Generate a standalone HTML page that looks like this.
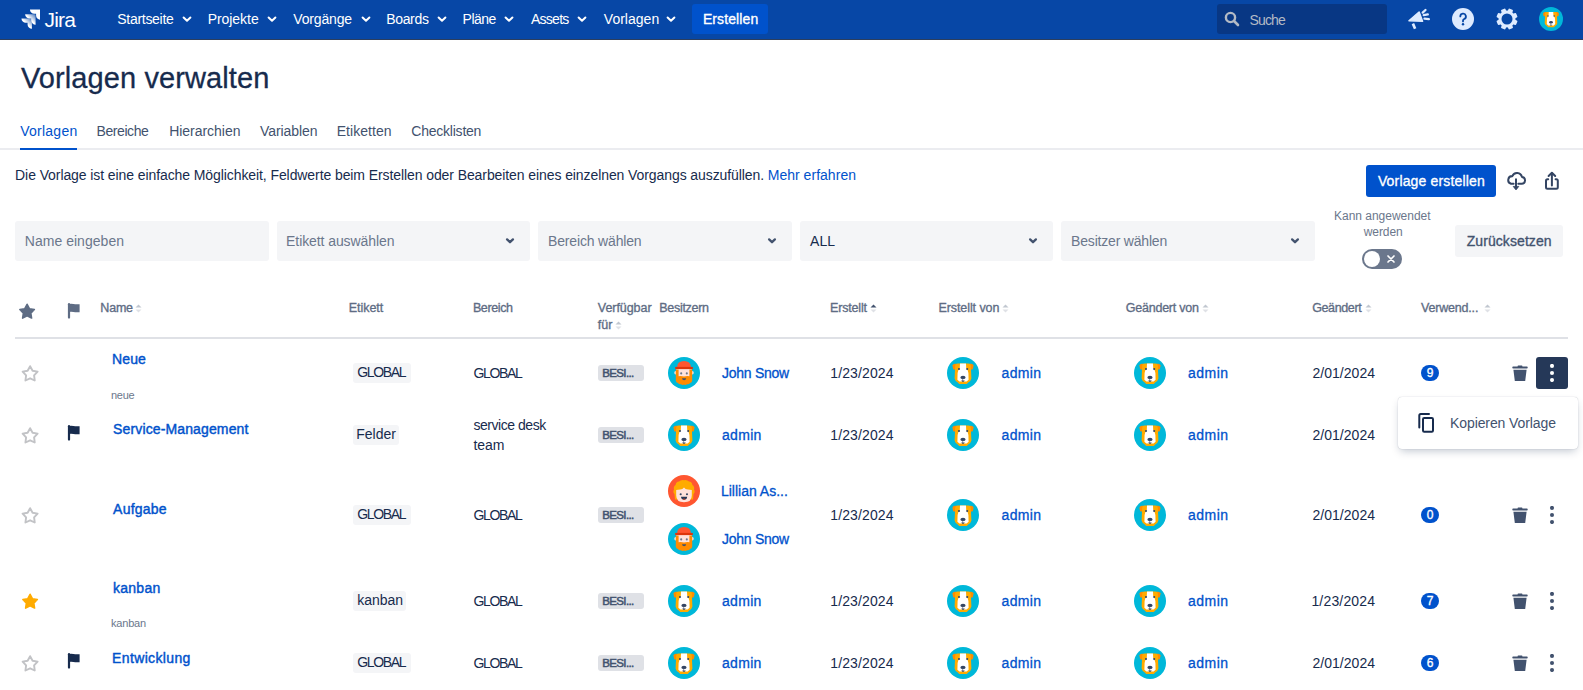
<!DOCTYPE html>
<html><head><meta charset="utf-8"><title>Vorlagen verwalten</title>
<style>
html,body{margin:0;padding:0;background:#fff;width:1583px;height:690px;overflow:hidden;position:relative;font-family:"Liberation Sans", sans-serif}
.t{position:absolute;white-space:nowrap;line-height:1}
svg{display:block}
</style></head><body>
<div style="position:absolute;left:0px;top:0px;width:1583px;height:39px;background:#0747A6"></div>
<div style="position:absolute;left:0px;top:39px;width:1583px;height:1px;background:#2c3e5d"></div>
<svg style="position:absolute;left:20.5px;top:9.3px" width="19.8" height="19.8" viewBox="0 0 21 21">
<defs><linearGradient id="lg1" x1="1" y1="0" x2="0" y2="1"><stop offset="0" stop-color="#fff" stop-opacity=".25"/><stop offset=".5" stop-color="#fff"/><stop offset="1" stop-color="#fff"/></linearGradient></defs>
<path d="M20 0.5H9.5a4.6 4.6 0 0 0 4.6 4.6h1.9v1.8a4.6 4.6 0 0 0 4.6 4.6V1.1A.6.6 0 0 0 20 .5z" fill="#fff"/>
<path d="M14.9 5.6H4.4a4.6 4.6 0 0 0 4.6 4.6h1.9V12a4.6 4.6 0 0 0 4.6 4.6V6.2a.6.6 0 0 0-.6-.6z" fill="url(#lg1)"/>
<path d="M9.7 10.8H-.7a4.6 4.6 0 0 0 4.6 4.6h1.9v1.8a4.6 4.6 0 0 0 4.6 4.6v-10.4a.6.6 0 0 0-.6-.6z" fill="url(#lg1)" transform="translate(1.2,-.8)"/>
</svg>
<div class="t" style="left:44.60px;top:9.12px;font-size:21px;color:#fff;font-weight:400;letter-spacing:-0.820px;">Jira</div>
<div class="t" style="left:117.30px;top:12.15px;font-size:14px;color:#fff;font-weight:400;letter-spacing:-0.295px;">Startseite</div>
<svg style="position:absolute;left:181.9px;top:16px" width="10" height="7" viewBox="0 0 10 7"><path d="M1.6 1.5 L5 4.8 L8.4 1.5" fill="none" stroke="#fff" stroke-width="2" stroke-linecap="round" stroke-linejoin="round"/></svg>
<div class="t" style="left:207.70px;top:12.15px;font-size:14px;color:#fff;font-weight:400;letter-spacing:-0.053px;">Projekte</div>
<svg style="position:absolute;left:266.6px;top:16px" width="10" height="7" viewBox="0 0 10 7"><path d="M1.6 1.5 L5 4.8 L8.4 1.5" fill="none" stroke="#fff" stroke-width="2" stroke-linecap="round" stroke-linejoin="round"/></svg>
<div class="t" style="left:293.30px;top:12.15px;font-size:14px;color:#fff;font-weight:400;letter-spacing:-0.165px;">Vorgänge</div>
<svg style="position:absolute;left:360.5px;top:16px" width="10" height="7" viewBox="0 0 10 7"><path d="M1.6 1.5 L5 4.8 L8.4 1.5" fill="none" stroke="#fff" stroke-width="2" stroke-linecap="round" stroke-linejoin="round"/></svg>
<div class="t" style="left:386.20px;top:12.15px;font-size:14px;color:#fff;font-weight:400;letter-spacing:-0.332px;">Boards</div>
<svg style="position:absolute;left:436.8px;top:16px" width="10" height="7" viewBox="0 0 10 7"><path d="M1.6 1.5 L5 4.8 L8.4 1.5" fill="none" stroke="#fff" stroke-width="2" stroke-linecap="round" stroke-linejoin="round"/></svg>
<div class="t" style="left:462.60px;top:12.15px;font-size:14px;color:#fff;font-weight:400;letter-spacing:-0.530px;">Pläne</div>
<svg style="position:absolute;left:504.3px;top:16px" width="10" height="7" viewBox="0 0 10 7"><path d="M1.6 1.5 L5 4.8 L8.4 1.5" fill="none" stroke="#fff" stroke-width="2" stroke-linecap="round" stroke-linejoin="round"/></svg>
<div class="t" style="left:531.00px;top:12.15px;font-size:14px;color:#fff;font-weight:400;letter-spacing:-0.743px;">Assets</div>
<svg style="position:absolute;left:577.0999999999999px;top:16px" width="10" height="7" viewBox="0 0 10 7"><path d="M1.6 1.5 L5 4.8 L8.4 1.5" fill="none" stroke="#fff" stroke-width="2" stroke-linecap="round" stroke-linejoin="round"/></svg>
<div class="t" style="left:603.80px;top:12.15px;font-size:14px;color:#fff;font-weight:400;letter-spacing:0.017px;">Vorlagen</div>
<svg style="position:absolute;left:666.3px;top:16px" width="10" height="7" viewBox="0 0 10 7"><path d="M1.6 1.5 L5 4.8 L8.4 1.5" fill="none" stroke="#fff" stroke-width="2" stroke-linecap="round" stroke-linejoin="round"/></svg>
<div style="position:absolute;left:692px;top:4px;width:76px;height:30px;background:#0052CC;border-radius:3px"></div>
<div class="t" style="left:702.90px;top:12.05px;font-size:14px;color:#fff;font-weight:400;letter-spacing:0.102px;-webkit-text-stroke:0.33px #fff;">Erstellen</div>
<div style="position:absolute;left:1217px;top:4px;width:170px;height:30px;background:#083784;border-radius:3px"></div>
<svg style="position:absolute;left:1224px;top:11px" width="16" height="16" viewBox="0 0 16 16"><circle cx="6.5" cy="6.5" r="4.6" fill="none" stroke="#B3BAC5" stroke-width="2.4"/><path d="M10 10 L14 14" stroke="#B3BAC5" stroke-width="2.6" stroke-linecap="round"/></svg>
<div class="t" style="left:1249.60px;top:12.95px;font-size:14px;color:#B3BAC5;font-weight:400;letter-spacing:-0.903px;">Suche</div>
<svg style="position:absolute;left:1407px;top:8px" width="24" height="22" viewBox="0 0 24 22"><path d="M2 12.8 L12.1 4.1 L15.5 13.3 Z" fill="#DEEBFF" stroke="#DEEBFF" stroke-width="1.6" stroke-linejoin="round"/><path d="M5.9 15.6 L8.1 20.7" stroke="#DEEBFF" stroke-width="2.7"/><path d="M15.7 4.6 L18.5 2 M16.7 7.1 L20.8 6.4 M17.5 10.7 L21.9 11.2" stroke="#DEEBFF" stroke-width="2.3" stroke-linecap="round"/></svg>
<svg style="position:absolute;left:1452px;top:8px" width="22" height="22" viewBox="0 0 22 22"><circle cx="11" cy="11" r="11" fill="#DEEBFF"/><path d="M8.3 8.4a2.8 2.8 0 1 1 3.9 2.6c-.8.4-1.2.9-1.2 1.8v.6" fill="none" stroke="#0747A6" stroke-width="1.8" stroke-linecap="round"/><circle cx="11" cy="16.3" r="1.2" fill="#0747A6"/></svg>
<svg style="position:absolute;left:1496px;top:8px" width="22" height="22" viewBox="0 0 22 22"><g transform="translate(11,11)"><rect x="-2.4" y="-10.6" width="4.8" height="5" rx="1" fill="#DEEBFF" transform="rotate(22.5)"/><rect x="-2.4" y="-10.6" width="4.8" height="5" rx="1" fill="#DEEBFF" transform="rotate(67.5)"/><rect x="-2.4" y="-10.6" width="4.8" height="5" rx="1" fill="#DEEBFF" transform="rotate(112.5)"/><rect x="-2.4" y="-10.6" width="4.8" height="5" rx="1" fill="#DEEBFF" transform="rotate(157.5)"/><rect x="-2.4" y="-10.6" width="4.8" height="5" rx="1" fill="#DEEBFF" transform="rotate(202.5)"/><rect x="-2.4" y="-10.6" width="4.8" height="5" rx="1" fill="#DEEBFF" transform="rotate(247.5)"/><rect x="-2.4" y="-10.6" width="4.8" height="5" rx="1" fill="#DEEBFF" transform="rotate(292.5)"/><rect x="-2.4" y="-10.6" width="4.8" height="5" rx="1" fill="#DEEBFF" transform="rotate(337.5)"/><circle r="8.5" fill="#DEEBFF"/><circle r="5.5" fill="#0747A6"/></g></svg>
<div style="position:absolute;left:1539px;top:7px;width:24px;height:24px;overflow:hidden">
<svg style="position:absolute;left:0px;top:0px" width="24" height="24" viewBox="0 0 32 32"><circle cx="16" cy="16" r="16" fill="#00B8D9"/>
<path d="M5.6 8.2 Q6.5 6.6 9 6.8 L11 7.5 L10.2 12.6 L6.4 12.4 Q5.4 10.5 5.6 8.2Z" fill="#FF8B00"/>
<path d="M26.4 8.2 Q25.5 6.6 23 6.8 L21 7.5 L21.8 12.6 L25.6 12.4 Q26.6 10.5 26.4 8.2Z" fill="#FF8B00"/>
<path d="M8.2 8.6 Q8.5 6.6 10.5 6.6 H21.5 Q23.5 6.6 23.8 8.6 L24.4 21.6 Q24 23.8 21.5 25.2 L19.8 27 H12.2 L10.5 25.2 Q8 23.8 7.6 21.6 Z" fill="#FFAB00"/>
<path d="M13 6.6 H19 L19.2 11 Q21.2 13 21.4 16 L21.6 22.8 L19.6 24.6 H12.4 L10.4 22.8 L10.6 16 Q10.8 13 12.8 11 Z" fill="#fff"/>
<circle cx="12" cy="12" r="1.05" fill="#344563"/><circle cx="20.2" cy="12" r="1.05" fill="#344563"/>
<ellipse cx="16" cy="20.4" rx="2.6" ry="1.7" fill="#344563"/><path d="M14.2 23.6 H17.8 L16.8 24.8 H15.2 Z" fill="#344563"/><path d="M15.7 21.5 V23.8" stroke="#344563" stroke-width=".6"/>
</svg>
</div>
<div class="t" style="left:21.00px;top:63.65px;font-size:29px;color:#172B4D;font-weight:400;letter-spacing:0.098px;-webkit-text-stroke:0.3px #172B4D;">Vorlagen verwalten</div>
<div class="t" style="left:20.30px;top:123.95px;font-size:14px;color:#0052CC;font-weight:400;letter-spacing:0.231px;">Vorlagen</div>
<div class="t" style="left:96.60px;top:123.95px;font-size:14px;color:#42526E;font-weight:400;letter-spacing:-0.438px;">Bereiche</div>
<div class="t" style="left:169.20px;top:123.95px;font-size:14px;color:#42526E;font-weight:400;letter-spacing:-0.030px;">Hierarchien</div>
<div class="t" style="left:260.00px;top:123.95px;font-size:14px;color:#42526E;font-weight:400;letter-spacing:-0.078px;">Variablen</div>
<div class="t" style="left:336.70px;top:123.95px;font-size:14px;color:#42526E;font-weight:400;letter-spacing:0.051px;">Etiketten</div>
<div class="t" style="left:411.30px;top:123.95px;font-size:14px;color:#42526E;font-weight:400;letter-spacing:-0.228px;">Checklisten</div>
<div style="position:absolute;left:0px;top:148px;width:1583px;height:2px;background:#EBECF0"></div>
<div style="position:absolute;left:20px;top:148px;width:57px;height:2px;background:#0052CC"></div>
<div class="t" style="left:15.10px;top:167.95px;font-size:14px;color:#172B4D;font-weight:400;letter-spacing:-0.088px;">Die Vorlage ist eine einfache Möglichkeit, Feldwerte beim Erstellen oder Bearbeiten eines einzelnen Vorgangs auszufüllen.</div>
<div class="t" style="left:767.70px;top:167.95px;font-size:14px;color:#0052CC;font-weight:400;letter-spacing:0.030px;">Mehr erfahren</div>
<div style="position:absolute;left:1366px;top:165px;width:130px;height:32px;background:#0052CC;border-radius:3px"></div>
<div class="t" style="left:1377.90px;top:174.15px;font-size:14px;color:#fff;font-weight:400;letter-spacing:0.162px;-webkit-text-stroke:0.33px #fff;">Vorlage erstellen</div>
<svg style="position:absolute;left:1504px;top:170px" width="24" height="22" viewBox="0 0 24 22"><path d="M9.6 13.75 H7 A3.9 3.9 0 0 1 8.32 6.13 A5 5 0 0 1 17.90 6.91 A3.4 3.4 0 0 1 17.6 13.7 H14.3" fill="none" stroke="#344563" stroke-width="2" stroke-linecap="round" stroke-linejoin="round"/><path d="M12 8.6 V17" stroke="#344563" stroke-width="2"/><path d="M9.2 16.4 L12 19.9 L14.8 16.4 Z" fill="#344563" stroke="#344563" stroke-width=".8" stroke-linejoin="round"/></svg>
<svg style="position:absolute;left:1543px;top:170px" width="18" height="22" viewBox="0 0 18 22"><path d="M5.2 9.2 H4.5 Q3 9.2 3 10.7 V17.3 Q3 18.8 4.5 18.8 H13.3 Q14.8 18.8 14.8 17.3 V10.7 Q14.8 9.2 13.3 9.2 H12.6" fill="none" stroke="#344563" stroke-width="2" stroke-linecap="round"/><path d="M8.9 15.4 V3.2" stroke="#344563" stroke-width="2" stroke-linecap="round"/><path d="M5.6 6 L8.9 2.7 L12.2 6" fill="none" stroke="#344563" stroke-width="2" stroke-linecap="round" stroke-linejoin="round"/></svg>
<div style="position:absolute;left:15px;top:221px;width:254px;height:40px;background:#F4F5F7;border-radius:3px"></div>
<div class="t" style="left:24.80px;top:233.95px;font-size:14px;color:#6B778C;font-weight:400;letter-spacing:0.028px;">Name eingeben</div>
<div style="position:absolute;left:277px;top:221px;width:253px;height:40px;background:#F4F5F7;border-radius:3px"></div>
<div class="t" style="left:286.10px;top:233.95px;font-size:14px;color:#6B778C;font-weight:400;letter-spacing:-0.084px;">Etikett auswählen</div>
<svg style="position:absolute;left:505px;top:237px" width="10" height="8" viewBox="0 0 10 8"><path d="M2.1 2.4 L5 5.2 L7.9 2.4" fill="none" stroke="#42526E" stroke-width="2.3" stroke-linecap="round" stroke-linejoin="round"/></svg>
<div style="position:absolute;left:538px;top:221px;width:254px;height:40px;background:#F4F5F7;border-radius:3px"></div>
<div class="t" style="left:548.10px;top:233.95px;font-size:14px;color:#6B778C;font-weight:400;letter-spacing:-0.172px;">Bereich wählen</div>
<svg style="position:absolute;left:767px;top:237px" width="10" height="8" viewBox="0 0 10 8"><path d="M2.1 2.4 L5 5.2 L7.9 2.4" fill="none" stroke="#42526E" stroke-width="2.3" stroke-linecap="round" stroke-linejoin="round"/></svg>
<div style="position:absolute;left:800px;top:221px;width:253px;height:40px;background:#F4F5F7;border-radius:3px"></div>
<div class="t" style="left:810.10px;top:233.95px;font-size:14px;color:#172B4D;font-weight:400;letter-spacing:0.000px;">ALL</div>
<svg style="position:absolute;left:1028px;top:237px" width="10" height="8" viewBox="0 0 10 8"><path d="M2.1 2.4 L5 5.2 L7.9 2.4" fill="none" stroke="#42526E" stroke-width="2.3" stroke-linecap="round" stroke-linejoin="round"/></svg>
<div style="position:absolute;left:1061px;top:221px;width:254px;height:40px;background:#F4F5F7;border-radius:3px"></div>
<div class="t" style="left:1071.10px;top:233.95px;font-size:14px;color:#6B778C;font-weight:400;letter-spacing:-0.196px;">Besitzer wählen</div>
<svg style="position:absolute;left:1290px;top:237px" width="10" height="8" viewBox="0 0 10 8"><path d="M2.1 2.4 L5 5.2 L7.9 2.4" fill="none" stroke="#42526E" stroke-width="2.3" stroke-linecap="round" stroke-linejoin="round"/></svg>
<div class="t" style="left:1334.00px;top:209.84px;font-size:12px;color:#6B778C;font-weight:400;letter-spacing:-0.015px;">Kann angewendet</div>
<div class="t" style="left:1363.70px;top:226.24px;font-size:12px;color:#6B778C;font-weight:400;letter-spacing:-0.057px;">werden</div>
<div style="position:absolute;left:1362px;top:249px;width:40px;height:20px;background:#6B778C;border-radius:10px"></div>
<div style="position:absolute;left:1364px;top:251px;width:16px;height:16px;background:#fff;border-radius:8px"></div>
<svg style="position:absolute;left:1386px;top:254px" width="10" height="10" viewBox="0 0 10 10"><path d="M2 2 L8 8 M8 2 L2 8" stroke="#fff" stroke-width="1.7" stroke-linecap="round"/></svg>
<div style="position:absolute;left:1455px;top:225px;width:108px;height:32px;background:#F4F5F7;border-radius:3px"></div>
<div class="t" style="left:1466.70px;top:233.85px;font-size:14px;color:#42526E;font-weight:400;letter-spacing:0.077px;-webkit-text-stroke:0.33px #42526E;">Zurücksetzen</div>
<svg style="position:absolute;left:66.5px;top:303px" width="14" height="16" viewBox="0 0 14 16"><path d="M2 1.2 V14.6" stroke="#5E6C84" stroke-width="2.2" stroke-linecap="round"/><path d="M1.5 1 Q4 0.4 6.5 1 Q9.2 1.6 12.6 1.2 V9.2 Q9.2 9.6 6.5 9 Q4 8.4 1.5 9 Z" fill="#5E6C84"/></svg>
<div class="t" style="left:100.30px;top:301.62px;font-size:12.5px;color:#5E6C84;font-weight:400;letter-spacing:-0.197px;-webkit-text-stroke:0.33px #5E6C84;">Name</div>
<svg style="position:absolute;left:135px;top:304px" width="7" height="9" viewBox="0 0 7 9"><path d="M0.5 3.6 L3.5 0.5 L6.5 3.6 Z" fill="#C1C7D0"/><path d="M0.5 5.4 L3.5 8.5 L6.5 5.4 Z" fill="#DFE1E6"/></svg>
<div class="t" style="left:348.70px;top:301.62px;font-size:12.5px;color:#5E6C84;font-weight:400;letter-spacing:-0.027px;-webkit-text-stroke:0.33px #5E6C84;">Etikett</div>
<div class="t" style="left:472.90px;top:301.62px;font-size:12.5px;color:#5E6C84;font-weight:400;letter-spacing:-0.372px;-webkit-text-stroke:0.33px #5E6C84;">Bereich</div>
<div class="t" style="left:597.80px;top:301.62px;font-size:12.5px;color:#5E6C84;font-weight:400;letter-spacing:-0.055px;-webkit-text-stroke:0.33px #5E6C84;">Verfügbar</div>
<div class="t" style="left:659.30px;top:301.62px;font-size:12.5px;color:#5E6C84;font-weight:400;letter-spacing:-0.307px;-webkit-text-stroke:0.33px #5E6C84;">Besitzern</div>
<div class="t" style="left:830.00px;top:301.62px;font-size:12.5px;color:#5E6C84;font-weight:400;letter-spacing:-0.161px;-webkit-text-stroke:0.33px #5E6C84;">Erstellt</div>
<svg style="position:absolute;left:870px;top:304px" width="7" height="9" viewBox="0 0 7 9"><path d="M0.5 3.6 L3.5 0.5 L6.5 3.6 Z" fill="#42526E"/><path d="M0.5 5.4 L3.5 8.5 L6.5 5.4 Z" fill="#DFE1E6"/></svg>
<div class="t" style="left:938.40px;top:301.62px;font-size:12.5px;color:#5E6C84;font-weight:400;letter-spacing:-0.071px;-webkit-text-stroke:0.33px #5E6C84;">Erstellt von</div>
<svg style="position:absolute;left:1002px;top:304px" width="7" height="9" viewBox="0 0 7 9"><path d="M0.5 3.6 L3.5 0.5 L6.5 3.6 Z" fill="#C1C7D0"/><path d="M0.5 5.4 L3.5 8.5 L6.5 5.4 Z" fill="#DFE1E6"/></svg>
<div class="t" style="left:1125.80px;top:301.62px;font-size:12.5px;color:#5E6C84;font-weight:400;letter-spacing:-0.236px;-webkit-text-stroke:0.33px #5E6C84;">Geändert von</div>
<svg style="position:absolute;left:1202px;top:304px" width="7" height="9" viewBox="0 0 7 9"><path d="M0.5 3.6 L3.5 0.5 L6.5 3.6 Z" fill="#C1C7D0"/><path d="M0.5 5.4 L3.5 8.5 L6.5 5.4 Z" fill="#DFE1E6"/></svg>
<div class="t" style="left:1312.20px;top:301.62px;font-size:12.5px;color:#5E6C84;font-weight:400;letter-spacing:-0.378px;-webkit-text-stroke:0.33px #5E6C84;">Geändert</div>
<svg style="position:absolute;left:1365px;top:304px" width="7" height="9" viewBox="0 0 7 9"><path d="M0.5 3.6 L3.5 0.5 L6.5 3.6 Z" fill="#C1C7D0"/><path d="M0.5 5.4 L3.5 8.5 L6.5 5.4 Z" fill="#DFE1E6"/></svg>
<div class="t" style="left:1421.00px;top:301.62px;font-size:12.5px;color:#5E6C84;font-weight:400;letter-spacing:-0.188px;-webkit-text-stroke:0.33px #5E6C84;">Verwend...</div>
<svg style="position:absolute;left:1484px;top:304px" width="7" height="9" viewBox="0 0 7 9"><path d="M0.5 3.6 L3.5 0.5 L6.5 3.6 Z" fill="#C1C7D0"/><path d="M0.5 5.4 L3.5 8.5 L6.5 5.4 Z" fill="#DFE1E6"/></svg>
<div class="t" style="left:597.80px;top:318.92px;font-size:12.5px;color:#5E6C84;font-weight:400;letter-spacing:0.000px;-webkit-text-stroke:0.33px #5E6C84;">für</div>
<svg style="position:absolute;left:614.5px;top:320.5px" width="7" height="9" viewBox="0 0 7 9"><path d="M0.5 3.6 L3.5 0.5 L6.5 3.6 Z" fill="#C1C7D0"/><path d="M0.5 5.4 L3.5 8.5 L6.5 5.4 Z" fill="#DFE1E6"/></svg>
<div style="position:absolute;left:15px;top:337px;width:1553px;height:2px;background:#DFE1E6"></div>
<svg style="position:absolute;left:17px;top:301px" width="20" height="20" viewBox="0 0 20 20"><path d="M10.10 3.30 L12.39 7.74 L17.33 8.55 L13.81 12.11 L14.57 17.05 L10.10 14.80 L5.63 17.05 L6.39 12.11 L2.87 8.55 L7.81 7.74 Z" fill="#5E6C84" stroke="#5E6C84" stroke-width="1.6" stroke-linejoin="round"/></svg>
<svg style="position:absolute;left:20px;top:363px" width="20" height="20" viewBox="0 0 20 20"><path d="M10.10 3.20 L12.57 7.70 L17.61 8.66 L14.09 12.40 L14.74 17.49 L10.10 15.30 L5.46 17.49 L6.11 12.40 L2.59 8.66 L7.63 7.70 Z" fill="none" stroke="#C2C3C6" stroke-width="1.9" stroke-linejoin="round"/></svg>
<div class="t" style="left:112.10px;top:352.35px;font-size:14px;color:#0052CC;font-weight:400;letter-spacing:0.106px;-webkit-text-stroke:0.42px #0052CC;">Neue</div>
<div class="t" style="left:111.00px;top:389.69px;font-size:11px;color:#6B778C;font-weight:400;letter-spacing:-0.284px;">neue</div>
<div style="position:absolute;left:353px;top:363.4px;width:57.7px;height:19.2px;background:#F4F5F7;border-radius:3px"></div>
<div class="t" style="left:357.20px;top:365.25px;font-size:14px;color:#172B4D;font-weight:400;letter-spacing:-1.348px;">GLOBAL</div>
<div class="t" style="left:473.40px;top:365.95px;font-size:14px;color:#172B4D;font-weight:400;letter-spacing:-1.328px;">GLOBAL</div>
<div style="position:absolute;left:598px;top:365.2px;width:45.5px;height:15.6px;background:#DFE1E6;border-radius:3px"></div>
<div class="t" style="left:602.20px;top:367.87px;font-size:11.5px;color:#42526E;font-weight:400;letter-spacing:-0.616px;-webkit-text-stroke:0.5px #42526E;">BESI...</div>
<svg style="position:absolute;left:668px;top:357px" width="32" height="32" viewBox="0 0 32 32"><circle cx="16" cy="16" r="16" fill="#00B8D9"/>
<ellipse cx="7.6" cy="15.7" rx="1.3" ry="1.8" fill="#FFE2DB"/><ellipse cx="24.4" cy="15.7" rx="1.3" ry="1.8" fill="#FFE2DB"/>
<rect x="8.3" y="11.5" width="15.4" height="9" fill="#FFE2DB"/>
<path d="M7.8 12.5 H10.6 V19.2 Q13 18.6 16 19.6 Q19 18.6 21.4 19.2 V12.5 H24.2 V23.5 Q24 25.6 22 26 Q21 27.8 19 27.2 Q17.5 28.4 16 27.6 Q14.5 28.4 13 27.2 Q11 27.8 10 26 Q8 25.6 7.8 23.5 Z" fill="#FF8B00"/>
<path d="M9.1 10.2 Q9.3 3.9 16 3.9 Q22.7 3.9 22.9 10.2 Z" fill="#FF5630"/>
<rect x="7.2" y="9.9" width="17.6" height="2.2" fill="#DE350B"/>
<circle cx="13.2" cy="16.4" r="1.05" fill="#6B778C"/><circle cx="18.8" cy="16.4" r="1.05" fill="#6B778C"/>
<path d="M14 21.2 H18.2 Q18 23.3 16.1 23.3 Q14.2 23.3 14 21.2Z" fill="#42526E"/>
</svg>
<div class="t" style="left:721.90px;top:366.05px;font-size:14px;color:#0052CC;font-weight:400;letter-spacing:-0.245px;-webkit-text-stroke:0.3px #0052CC;">John Snow</div>
<div class="t" style="left:830.30px;top:365.95px;font-size:14px;color:#172B4D;font-weight:400;letter-spacing:0.113px;">1/23/2024</div>
<svg style="position:absolute;left:947px;top:357px" width="32" height="32" viewBox="0 0 32 32"><circle cx="16" cy="16" r="16" fill="#00B8D9"/>
<path d="M5.6 8.2 Q6.5 6.6 9 6.8 L11 7.5 L10.2 12.6 L6.4 12.4 Q5.4 10.5 5.6 8.2Z" fill="#FF8B00"/>
<path d="M26.4 8.2 Q25.5 6.6 23 6.8 L21 7.5 L21.8 12.6 L25.6 12.4 Q26.6 10.5 26.4 8.2Z" fill="#FF8B00"/>
<path d="M8.2 8.6 Q8.5 6.6 10.5 6.6 H21.5 Q23.5 6.6 23.8 8.6 L24.4 21.6 Q24 23.8 21.5 25.2 L19.8 27 H12.2 L10.5 25.2 Q8 23.8 7.6 21.6 Z" fill="#FFAB00"/>
<path d="M13 6.6 H19 L19.2 11 Q21.2 13 21.4 16 L21.6 22.8 L19.6 24.6 H12.4 L10.4 22.8 L10.6 16 Q10.8 13 12.8 11 Z" fill="#fff"/>
<circle cx="12" cy="12" r="1.05" fill="#344563"/><circle cx="20.2" cy="12" r="1.05" fill="#344563"/>
<ellipse cx="16" cy="20.4" rx="2.6" ry="1.7" fill="#344563"/><path d="M14.2 23.6 H17.8 L16.8 24.8 H15.2 Z" fill="#344563"/><path d="M15.7 21.5 V23.8" stroke="#344563" stroke-width=".6"/>
</svg>
<div class="t" style="left:1001.60px;top:366.05px;font-size:14px;color:#0052CC;font-weight:400;letter-spacing:0.339px;-webkit-text-stroke:0.3px #0052CC;">admin</div>
<svg style="position:absolute;left:1134px;top:357px" width="32" height="32" viewBox="0 0 32 32"><circle cx="16" cy="16" r="16" fill="#00B8D9"/>
<path d="M5.6 8.2 Q6.5 6.6 9 6.8 L11 7.5 L10.2 12.6 L6.4 12.4 Q5.4 10.5 5.6 8.2Z" fill="#FF8B00"/>
<path d="M26.4 8.2 Q25.5 6.6 23 6.8 L21 7.5 L21.8 12.6 L25.6 12.4 Q26.6 10.5 26.4 8.2Z" fill="#FF8B00"/>
<path d="M8.2 8.6 Q8.5 6.6 10.5 6.6 H21.5 Q23.5 6.6 23.8 8.6 L24.4 21.6 Q24 23.8 21.5 25.2 L19.8 27 H12.2 L10.5 25.2 Q8 23.8 7.6 21.6 Z" fill="#FFAB00"/>
<path d="M13 6.6 H19 L19.2 11 Q21.2 13 21.4 16 L21.6 22.8 L19.6 24.6 H12.4 L10.4 22.8 L10.6 16 Q10.8 13 12.8 11 Z" fill="#fff"/>
<circle cx="12" cy="12" r="1.05" fill="#344563"/><circle cx="20.2" cy="12" r="1.05" fill="#344563"/>
<ellipse cx="16" cy="20.4" rx="2.6" ry="1.7" fill="#344563"/><path d="M14.2 23.6 H17.8 L16.8 24.8 H15.2 Z" fill="#344563"/><path d="M15.7 21.5 V23.8" stroke="#344563" stroke-width=".6"/>
</svg>
<div class="t" style="left:1187.90px;top:366.05px;font-size:14px;color:#0052CC;font-weight:400;letter-spacing:0.514px;-webkit-text-stroke:0.3px #0052CC;">admin</div>
<div class="t" style="left:1312.40px;top:365.95px;font-size:14px;color:#172B4D;font-weight:400;letter-spacing:0.050px;">2/01/2024</div>
<div style="position:absolute;left:1421px;top:365px;width:18px;height:16px;background:#0052CC;border-radius:8px"></div>
<div class="t" style="left:1426.80px;top:367.14px;font-size:12px;color:#fff;font-weight:400;letter-spacing:0.000px;-webkit-text-stroke:0.33px #fff;">9</div>
<svg style="position:absolute;left:1512px;top:365px" width="16" height="16" viewBox="0 0 16 16"><rect x="5.6" y="0.6" width="4.8" height="1.8" rx=".6" fill="#42526E"/><rect x="0.3" y="1.6" width="15.4" height="2" rx=".8" fill="#42526E"/><path d="M1.4 4.8 H14.6 L13.2 16 H2.8 Z" fill="#42526E"/></svg>
<div style="position:absolute;left:1536px;top:357px;width:32px;height:32px;background:#253858;border-radius:3px"></div>
<svg style="position:absolute;left:1549px;top:364px" width="6" height="18" viewBox="0 0 6 18"><circle cx="3" cy="1.9" r="2.05" fill="#fff"/><circle cx="3" cy="9" r="2.05" fill="#fff"/><circle cx="3" cy="16" r="2.05" fill="#fff"/></svg>
<svg style="position:absolute;left:20px;top:425px" width="20" height="20" viewBox="0 0 20 20"><path d="M10.10 3.20 L12.57 7.70 L17.61 8.66 L14.09 12.40 L14.74 17.49 L10.10 15.30 L5.46 17.49 L6.11 12.40 L2.59 8.66 L7.63 7.70 Z" fill="none" stroke="#C2C3C6" stroke-width="1.9" stroke-linejoin="round"/></svg>
<svg style="position:absolute;left:66.5px;top:425px" width="14" height="16" viewBox="0 0 14 16"><path d="M2 1.2 V14.6" stroke="#172B4D" stroke-width="2.2" stroke-linecap="round"/><path d="M1.5 1 Q4 0.4 6.5 1 Q9.2 1.6 12.6 1.2 V9.2 Q9.2 9.6 6.5 9 Q4 8.4 1.5 9 Z" fill="#172B4D"/></svg>
<div class="t" style="left:113.10px;top:422.45px;font-size:14px;color:#0052CC;font-weight:400;letter-spacing:0.131px;-webkit-text-stroke:0.42px #0052CC;">Service-Management</div>
<div style="position:absolute;left:353px;top:425.4px;width:45.5px;height:19.2px;background:#F4F5F7;border-radius:3px"></div>
<div class="t" style="left:356.20px;top:427.25px;font-size:14px;color:#172B4D;font-weight:400;letter-spacing:0.000px;">Felder</div>
<div class="t" style="left:473.40px;top:417.95px;font-size:14px;color:#172B4D;font-weight:400;letter-spacing:-0.455px;">service desk</div>
<div class="t" style="left:473.40px;top:437.55px;font-size:14px;color:#172B4D;font-weight:400;letter-spacing:0.000px;">team</div>
<div style="position:absolute;left:598px;top:427.2px;width:45.5px;height:15.6px;background:#DFE1E6;border-radius:3px"></div>
<div class="t" style="left:602.20px;top:429.87px;font-size:11.5px;color:#42526E;font-weight:400;letter-spacing:-0.616px;-webkit-text-stroke:0.5px #42526E;">BESI...</div>
<svg style="position:absolute;left:668px;top:419px" width="32" height="32" viewBox="0 0 32 32"><circle cx="16" cy="16" r="16" fill="#00B8D9"/>
<path d="M5.6 8.2 Q6.5 6.6 9 6.8 L11 7.5 L10.2 12.6 L6.4 12.4 Q5.4 10.5 5.6 8.2Z" fill="#FF8B00"/>
<path d="M26.4 8.2 Q25.5 6.6 23 6.8 L21 7.5 L21.8 12.6 L25.6 12.4 Q26.6 10.5 26.4 8.2Z" fill="#FF8B00"/>
<path d="M8.2 8.6 Q8.5 6.6 10.5 6.6 H21.5 Q23.5 6.6 23.8 8.6 L24.4 21.6 Q24 23.8 21.5 25.2 L19.8 27 H12.2 L10.5 25.2 Q8 23.8 7.6 21.6 Z" fill="#FFAB00"/>
<path d="M13 6.6 H19 L19.2 11 Q21.2 13 21.4 16 L21.6 22.8 L19.6 24.6 H12.4 L10.4 22.8 L10.6 16 Q10.8 13 12.8 11 Z" fill="#fff"/>
<circle cx="12" cy="12" r="1.05" fill="#344563"/><circle cx="20.2" cy="12" r="1.05" fill="#344563"/>
<ellipse cx="16" cy="20.4" rx="2.6" ry="1.7" fill="#344563"/><path d="M14.2 23.6 H17.8 L16.8 24.8 H15.2 Z" fill="#344563"/><path d="M15.7 21.5 V23.8" stroke="#344563" stroke-width=".6"/>
</svg>
<div class="t" style="left:721.90px;top:428.05px;font-size:14px;color:#0052CC;font-weight:400;letter-spacing:0.339px;-webkit-text-stroke:0.3px #0052CC;">admin</div>
<div class="t" style="left:830.30px;top:427.95px;font-size:14px;color:#172B4D;font-weight:400;letter-spacing:0.113px;">1/23/2024</div>
<svg style="position:absolute;left:947px;top:419px" width="32" height="32" viewBox="0 0 32 32"><circle cx="16" cy="16" r="16" fill="#00B8D9"/>
<path d="M5.6 8.2 Q6.5 6.6 9 6.8 L11 7.5 L10.2 12.6 L6.4 12.4 Q5.4 10.5 5.6 8.2Z" fill="#FF8B00"/>
<path d="M26.4 8.2 Q25.5 6.6 23 6.8 L21 7.5 L21.8 12.6 L25.6 12.4 Q26.6 10.5 26.4 8.2Z" fill="#FF8B00"/>
<path d="M8.2 8.6 Q8.5 6.6 10.5 6.6 H21.5 Q23.5 6.6 23.8 8.6 L24.4 21.6 Q24 23.8 21.5 25.2 L19.8 27 H12.2 L10.5 25.2 Q8 23.8 7.6 21.6 Z" fill="#FFAB00"/>
<path d="M13 6.6 H19 L19.2 11 Q21.2 13 21.4 16 L21.6 22.8 L19.6 24.6 H12.4 L10.4 22.8 L10.6 16 Q10.8 13 12.8 11 Z" fill="#fff"/>
<circle cx="12" cy="12" r="1.05" fill="#344563"/><circle cx="20.2" cy="12" r="1.05" fill="#344563"/>
<ellipse cx="16" cy="20.4" rx="2.6" ry="1.7" fill="#344563"/><path d="M14.2 23.6 H17.8 L16.8 24.8 H15.2 Z" fill="#344563"/><path d="M15.7 21.5 V23.8" stroke="#344563" stroke-width=".6"/>
</svg>
<div class="t" style="left:1001.60px;top:428.05px;font-size:14px;color:#0052CC;font-weight:400;letter-spacing:0.339px;-webkit-text-stroke:0.3px #0052CC;">admin</div>
<svg style="position:absolute;left:1134px;top:419px" width="32" height="32" viewBox="0 0 32 32"><circle cx="16" cy="16" r="16" fill="#00B8D9"/>
<path d="M5.6 8.2 Q6.5 6.6 9 6.8 L11 7.5 L10.2 12.6 L6.4 12.4 Q5.4 10.5 5.6 8.2Z" fill="#FF8B00"/>
<path d="M26.4 8.2 Q25.5 6.6 23 6.8 L21 7.5 L21.8 12.6 L25.6 12.4 Q26.6 10.5 26.4 8.2Z" fill="#FF8B00"/>
<path d="M8.2 8.6 Q8.5 6.6 10.5 6.6 H21.5 Q23.5 6.6 23.8 8.6 L24.4 21.6 Q24 23.8 21.5 25.2 L19.8 27 H12.2 L10.5 25.2 Q8 23.8 7.6 21.6 Z" fill="#FFAB00"/>
<path d="M13 6.6 H19 L19.2 11 Q21.2 13 21.4 16 L21.6 22.8 L19.6 24.6 H12.4 L10.4 22.8 L10.6 16 Q10.8 13 12.8 11 Z" fill="#fff"/>
<circle cx="12" cy="12" r="1.05" fill="#344563"/><circle cx="20.2" cy="12" r="1.05" fill="#344563"/>
<ellipse cx="16" cy="20.4" rx="2.6" ry="1.7" fill="#344563"/><path d="M14.2 23.6 H17.8 L16.8 24.8 H15.2 Z" fill="#344563"/><path d="M15.7 21.5 V23.8" stroke="#344563" stroke-width=".6"/>
</svg>
<div class="t" style="left:1187.90px;top:428.05px;font-size:14px;color:#0052CC;font-weight:400;letter-spacing:0.514px;-webkit-text-stroke:0.3px #0052CC;">admin</div>
<div class="t" style="left:1312.40px;top:427.95px;font-size:14px;color:#172B4D;font-weight:400;letter-spacing:0.050px;">2/01/2024</div>
<svg style="position:absolute;left:1512px;top:427px" width="16" height="16" viewBox="0 0 16 16"><rect x="5.6" y="0.6" width="4.8" height="1.8" rx=".6" fill="#42526E"/><rect x="0.3" y="1.6" width="15.4" height="2" rx=".8" fill="#42526E"/><path d="M1.4 4.8 H14.6 L13.2 16 H2.8 Z" fill="#42526E"/></svg>
<svg style="position:absolute;left:1549px;top:426px" width="6" height="18" viewBox="0 0 6 18"><circle cx="3" cy="1.9" r="2.05" fill="#42526E"/><circle cx="3" cy="9" r="2.05" fill="#42526E"/><circle cx="3" cy="16" r="2.05" fill="#42526E"/></svg>
<svg style="position:absolute;left:20px;top:505px" width="20" height="20" viewBox="0 0 20 20"><path d="M10.10 3.20 L12.57 7.70 L17.61 8.66 L14.09 12.40 L14.74 17.49 L10.10 15.30 L5.46 17.49 L6.11 12.40 L2.59 8.66 L7.63 7.70 Z" fill="none" stroke="#C2C3C6" stroke-width="1.9" stroke-linejoin="round"/></svg>
<div class="t" style="left:113.10px;top:502.05px;font-size:14px;color:#0052CC;font-weight:400;letter-spacing:0.205px;-webkit-text-stroke:0.42px #0052CC;">Aufgabe</div>
<div style="position:absolute;left:353px;top:505.4px;width:57.7px;height:19.2px;background:#F4F5F7;border-radius:3px"></div>
<div class="t" style="left:357.20px;top:507.25px;font-size:14px;color:#172B4D;font-weight:400;letter-spacing:-1.348px;">GLOBAL</div>
<div class="t" style="left:473.40px;top:507.95px;font-size:14px;color:#172B4D;font-weight:400;letter-spacing:-1.328px;">GLOBAL</div>
<div style="position:absolute;left:598px;top:507.2px;width:45.5px;height:15.6px;background:#DFE1E6;border-radius:3px"></div>
<div class="t" style="left:602.20px;top:509.87px;font-size:11.5px;color:#42526E;font-weight:400;letter-spacing:-0.616px;-webkit-text-stroke:0.5px #42526E;">BESI...</div>
<svg style="position:absolute;left:668px;top:475px" width="32" height="32" viewBox="0 0 32 32"><circle cx="16" cy="16" r="16" fill="#FF5630"/>
<path d="M6.5 19 Q4.5 17 6 14.5 Q5.2 11.5 7.6 10 Q8 6.8 11 6.6 Q13 4.6 16 5.2 Q19 4.6 21 6.6 Q24 6.8 24.4 10 Q26.8 11.5 26 14.5 Q27.5 17 25.5 19 L25 24.5 L7 24.5 Z" fill="#FFAB00"/>
<path d="M8.2 15 Q12 14.8 16 13.8 Q20 14.8 23.8 15 V20.5 Q23.8 27.2 16 27.2 Q8.2 27.2 8.2 20.5 Z" fill="#FFE2DB"/>
<path d="M13.5 15.2 Q15 13 16 12.4 Q17 13 18.5 15.2 Z" fill="#FFE2DB"/>
<circle cx="12.7" cy="19.3" r="1.05" fill="#344563"/><circle cx="19" cy="19.3" r="1.05" fill="#344563"/>
<path d="M13 21.8 H19.2 Q19 24.7 16.1 24.7 Q13.2 24.7 13 21.8Z" fill="#253858"/><path d="M14.8 24 Q16.1 22.9 17.4 24 Q16.9 24.7 16.1 24.7 Q15.3 24.7 14.8 24Z" fill="#DE350B"/>
</svg>
<div class="t" style="left:720.90px;top:484.05px;font-size:14px;color:#0052CC;font-weight:400;letter-spacing:0.008px;-webkit-text-stroke:0.3px #0052CC;">Lillian As...</div>
<svg style="position:absolute;left:668px;top:523px" width="32" height="32" viewBox="0 0 32 32"><circle cx="16" cy="16" r="16" fill="#00B8D9"/>
<ellipse cx="7.6" cy="15.7" rx="1.3" ry="1.8" fill="#FFE2DB"/><ellipse cx="24.4" cy="15.7" rx="1.3" ry="1.8" fill="#FFE2DB"/>
<rect x="8.3" y="11.5" width="15.4" height="9" fill="#FFE2DB"/>
<path d="M7.8 12.5 H10.6 V19.2 Q13 18.6 16 19.6 Q19 18.6 21.4 19.2 V12.5 H24.2 V23.5 Q24 25.6 22 26 Q21 27.8 19 27.2 Q17.5 28.4 16 27.6 Q14.5 28.4 13 27.2 Q11 27.8 10 26 Q8 25.6 7.8 23.5 Z" fill="#FF8B00"/>
<path d="M9.1 10.2 Q9.3 3.9 16 3.9 Q22.7 3.9 22.9 10.2 Z" fill="#FF5630"/>
<rect x="7.2" y="9.9" width="17.6" height="2.2" fill="#DE350B"/>
<circle cx="13.2" cy="16.4" r="1.05" fill="#6B778C"/><circle cx="18.8" cy="16.4" r="1.05" fill="#6B778C"/>
<path d="M14 21.2 H18.2 Q18 23.3 16.1 23.3 Q14.2 23.3 14 21.2Z" fill="#42526E"/>
</svg>
<div class="t" style="left:721.90px;top:532.05px;font-size:14px;color:#0052CC;font-weight:400;letter-spacing:-0.245px;-webkit-text-stroke:0.3px #0052CC;">John Snow</div>
<div class="t" style="left:830.30px;top:507.95px;font-size:14px;color:#172B4D;font-weight:400;letter-spacing:0.113px;">1/23/2024</div>
<svg style="position:absolute;left:947px;top:499px" width="32" height="32" viewBox="0 0 32 32"><circle cx="16" cy="16" r="16" fill="#00B8D9"/>
<path d="M5.6 8.2 Q6.5 6.6 9 6.8 L11 7.5 L10.2 12.6 L6.4 12.4 Q5.4 10.5 5.6 8.2Z" fill="#FF8B00"/>
<path d="M26.4 8.2 Q25.5 6.6 23 6.8 L21 7.5 L21.8 12.6 L25.6 12.4 Q26.6 10.5 26.4 8.2Z" fill="#FF8B00"/>
<path d="M8.2 8.6 Q8.5 6.6 10.5 6.6 H21.5 Q23.5 6.6 23.8 8.6 L24.4 21.6 Q24 23.8 21.5 25.2 L19.8 27 H12.2 L10.5 25.2 Q8 23.8 7.6 21.6 Z" fill="#FFAB00"/>
<path d="M13 6.6 H19 L19.2 11 Q21.2 13 21.4 16 L21.6 22.8 L19.6 24.6 H12.4 L10.4 22.8 L10.6 16 Q10.8 13 12.8 11 Z" fill="#fff"/>
<circle cx="12" cy="12" r="1.05" fill="#344563"/><circle cx="20.2" cy="12" r="1.05" fill="#344563"/>
<ellipse cx="16" cy="20.4" rx="2.6" ry="1.7" fill="#344563"/><path d="M14.2 23.6 H17.8 L16.8 24.8 H15.2 Z" fill="#344563"/><path d="M15.7 21.5 V23.8" stroke="#344563" stroke-width=".6"/>
</svg>
<div class="t" style="left:1001.60px;top:508.05px;font-size:14px;color:#0052CC;font-weight:400;letter-spacing:0.339px;-webkit-text-stroke:0.3px #0052CC;">admin</div>
<svg style="position:absolute;left:1134px;top:499px" width="32" height="32" viewBox="0 0 32 32"><circle cx="16" cy="16" r="16" fill="#00B8D9"/>
<path d="M5.6 8.2 Q6.5 6.6 9 6.8 L11 7.5 L10.2 12.6 L6.4 12.4 Q5.4 10.5 5.6 8.2Z" fill="#FF8B00"/>
<path d="M26.4 8.2 Q25.5 6.6 23 6.8 L21 7.5 L21.8 12.6 L25.6 12.4 Q26.6 10.5 26.4 8.2Z" fill="#FF8B00"/>
<path d="M8.2 8.6 Q8.5 6.6 10.5 6.6 H21.5 Q23.5 6.6 23.8 8.6 L24.4 21.6 Q24 23.8 21.5 25.2 L19.8 27 H12.2 L10.5 25.2 Q8 23.8 7.6 21.6 Z" fill="#FFAB00"/>
<path d="M13 6.6 H19 L19.2 11 Q21.2 13 21.4 16 L21.6 22.8 L19.6 24.6 H12.4 L10.4 22.8 L10.6 16 Q10.8 13 12.8 11 Z" fill="#fff"/>
<circle cx="12" cy="12" r="1.05" fill="#344563"/><circle cx="20.2" cy="12" r="1.05" fill="#344563"/>
<ellipse cx="16" cy="20.4" rx="2.6" ry="1.7" fill="#344563"/><path d="M14.2 23.6 H17.8 L16.8 24.8 H15.2 Z" fill="#344563"/><path d="M15.7 21.5 V23.8" stroke="#344563" stroke-width=".6"/>
</svg>
<div class="t" style="left:1187.90px;top:508.05px;font-size:14px;color:#0052CC;font-weight:400;letter-spacing:0.514px;-webkit-text-stroke:0.3px #0052CC;">admin</div>
<div class="t" style="left:1312.40px;top:507.95px;font-size:14px;color:#172B4D;font-weight:400;letter-spacing:0.050px;">2/01/2024</div>
<div style="position:absolute;left:1421px;top:507px;width:18px;height:16px;background:#0052CC;border-radius:8px"></div>
<div class="t" style="left:1426.80px;top:509.14px;font-size:12px;color:#fff;font-weight:400;letter-spacing:0.000px;-webkit-text-stroke:0.33px #fff;">0</div>
<svg style="position:absolute;left:1512px;top:507px" width="16" height="16" viewBox="0 0 16 16"><rect x="5.6" y="0.6" width="4.8" height="1.8" rx=".6" fill="#42526E"/><rect x="0.3" y="1.6" width="15.4" height="2" rx=".8" fill="#42526E"/><path d="M1.4 4.8 H14.6 L13.2 16 H2.8 Z" fill="#42526E"/></svg>
<svg style="position:absolute;left:1549px;top:506px" width="6" height="18" viewBox="0 0 6 18"><circle cx="3" cy="1.9" r="2.05" fill="#42526E"/><circle cx="3" cy="9" r="2.05" fill="#42526E"/><circle cx="3" cy="16" r="2.05" fill="#42526E"/></svg>
<svg style="position:absolute;left:20px;top:591px" width="20" height="20" viewBox="0 0 20 20"><path d="M10.10 3.30 L12.39 7.74 L17.33 8.55 L13.81 12.11 L14.57 17.05 L10.10 14.80 L5.63 17.05 L6.39 12.11 L2.87 8.55 L7.81 7.74 Z" fill="#FFAB00" stroke="#FFAB00" stroke-width="1.6" stroke-linejoin="round"/></svg>
<div class="t" style="left:113.10px;top:580.95px;font-size:14px;color:#0052CC;font-weight:400;letter-spacing:0.231px;-webkit-text-stroke:0.42px #0052CC;">kanban</div>
<div class="t" style="left:111.00px;top:617.69px;font-size:11px;color:#6B778C;font-weight:400;letter-spacing:-0.194px;">kanban</div>
<div style="position:absolute;left:353px;top:591.4px;width:52.6px;height:19.2px;background:#F4F5F7;border-radius:3px"></div>
<div class="t" style="left:357.20px;top:593.25px;font-size:14px;color:#172B4D;font-weight:400;letter-spacing:0.000px;">kanban</div>
<div class="t" style="left:473.40px;top:593.95px;font-size:14px;color:#172B4D;font-weight:400;letter-spacing:-1.328px;">GLOBAL</div>
<div style="position:absolute;left:598px;top:593.2px;width:45.5px;height:15.6px;background:#DFE1E6;border-radius:3px"></div>
<div class="t" style="left:602.20px;top:595.87px;font-size:11.5px;color:#42526E;font-weight:400;letter-spacing:-0.616px;-webkit-text-stroke:0.5px #42526E;">BESI...</div>
<svg style="position:absolute;left:668px;top:585px" width="32" height="32" viewBox="0 0 32 32"><circle cx="16" cy="16" r="16" fill="#00B8D9"/>
<path d="M5.6 8.2 Q6.5 6.6 9 6.8 L11 7.5 L10.2 12.6 L6.4 12.4 Q5.4 10.5 5.6 8.2Z" fill="#FF8B00"/>
<path d="M26.4 8.2 Q25.5 6.6 23 6.8 L21 7.5 L21.8 12.6 L25.6 12.4 Q26.6 10.5 26.4 8.2Z" fill="#FF8B00"/>
<path d="M8.2 8.6 Q8.5 6.6 10.5 6.6 H21.5 Q23.5 6.6 23.8 8.6 L24.4 21.6 Q24 23.8 21.5 25.2 L19.8 27 H12.2 L10.5 25.2 Q8 23.8 7.6 21.6 Z" fill="#FFAB00"/>
<path d="M13 6.6 H19 L19.2 11 Q21.2 13 21.4 16 L21.6 22.8 L19.6 24.6 H12.4 L10.4 22.8 L10.6 16 Q10.8 13 12.8 11 Z" fill="#fff"/>
<circle cx="12" cy="12" r="1.05" fill="#344563"/><circle cx="20.2" cy="12" r="1.05" fill="#344563"/>
<ellipse cx="16" cy="20.4" rx="2.6" ry="1.7" fill="#344563"/><path d="M14.2 23.6 H17.8 L16.8 24.8 H15.2 Z" fill="#344563"/><path d="M15.7 21.5 V23.8" stroke="#344563" stroke-width=".6"/>
</svg>
<div class="t" style="left:721.90px;top:594.05px;font-size:14px;color:#0052CC;font-weight:400;letter-spacing:0.339px;-webkit-text-stroke:0.3px #0052CC;">admin</div>
<div class="t" style="left:830.30px;top:593.95px;font-size:14px;color:#172B4D;font-weight:400;letter-spacing:0.113px;">1/23/2024</div>
<svg style="position:absolute;left:947px;top:585px" width="32" height="32" viewBox="0 0 32 32"><circle cx="16" cy="16" r="16" fill="#00B8D9"/>
<path d="M5.6 8.2 Q6.5 6.6 9 6.8 L11 7.5 L10.2 12.6 L6.4 12.4 Q5.4 10.5 5.6 8.2Z" fill="#FF8B00"/>
<path d="M26.4 8.2 Q25.5 6.6 23 6.8 L21 7.5 L21.8 12.6 L25.6 12.4 Q26.6 10.5 26.4 8.2Z" fill="#FF8B00"/>
<path d="M8.2 8.6 Q8.5 6.6 10.5 6.6 H21.5 Q23.5 6.6 23.8 8.6 L24.4 21.6 Q24 23.8 21.5 25.2 L19.8 27 H12.2 L10.5 25.2 Q8 23.8 7.6 21.6 Z" fill="#FFAB00"/>
<path d="M13 6.6 H19 L19.2 11 Q21.2 13 21.4 16 L21.6 22.8 L19.6 24.6 H12.4 L10.4 22.8 L10.6 16 Q10.8 13 12.8 11 Z" fill="#fff"/>
<circle cx="12" cy="12" r="1.05" fill="#344563"/><circle cx="20.2" cy="12" r="1.05" fill="#344563"/>
<ellipse cx="16" cy="20.4" rx="2.6" ry="1.7" fill="#344563"/><path d="M14.2 23.6 H17.8 L16.8 24.8 H15.2 Z" fill="#344563"/><path d="M15.7 21.5 V23.8" stroke="#344563" stroke-width=".6"/>
</svg>
<div class="t" style="left:1001.60px;top:594.05px;font-size:14px;color:#0052CC;font-weight:400;letter-spacing:0.339px;-webkit-text-stroke:0.3px #0052CC;">admin</div>
<svg style="position:absolute;left:1134px;top:585px" width="32" height="32" viewBox="0 0 32 32"><circle cx="16" cy="16" r="16" fill="#00B8D9"/>
<path d="M5.6 8.2 Q6.5 6.6 9 6.8 L11 7.5 L10.2 12.6 L6.4 12.4 Q5.4 10.5 5.6 8.2Z" fill="#FF8B00"/>
<path d="M26.4 8.2 Q25.5 6.6 23 6.8 L21 7.5 L21.8 12.6 L25.6 12.4 Q26.6 10.5 26.4 8.2Z" fill="#FF8B00"/>
<path d="M8.2 8.6 Q8.5 6.6 10.5 6.6 H21.5 Q23.5 6.6 23.8 8.6 L24.4 21.6 Q24 23.8 21.5 25.2 L19.8 27 H12.2 L10.5 25.2 Q8 23.8 7.6 21.6 Z" fill="#FFAB00"/>
<path d="M13 6.6 H19 L19.2 11 Q21.2 13 21.4 16 L21.6 22.8 L19.6 24.6 H12.4 L10.4 22.8 L10.6 16 Q10.8 13 12.8 11 Z" fill="#fff"/>
<circle cx="12" cy="12" r="1.05" fill="#344563"/><circle cx="20.2" cy="12" r="1.05" fill="#344563"/>
<ellipse cx="16" cy="20.4" rx="2.6" ry="1.7" fill="#344563"/><path d="M14.2 23.6 H17.8 L16.8 24.8 H15.2 Z" fill="#344563"/><path d="M15.7 21.5 V23.8" stroke="#344563" stroke-width=".6"/>
</svg>
<div class="t" style="left:1187.90px;top:594.05px;font-size:14px;color:#0052CC;font-weight:400;letter-spacing:0.514px;-webkit-text-stroke:0.3px #0052CC;">admin</div>
<div class="t" style="left:1311.40px;top:593.95px;font-size:14px;color:#172B4D;font-weight:400;letter-spacing:0.175px;">1/23/2024</div>
<div style="position:absolute;left:1421px;top:593px;width:18px;height:16px;background:#0052CC;border-radius:8px"></div>
<div class="t" style="left:1426.80px;top:595.14px;font-size:12px;color:#fff;font-weight:400;letter-spacing:0.000px;-webkit-text-stroke:0.33px #fff;">7</div>
<svg style="position:absolute;left:1512px;top:593px" width="16" height="16" viewBox="0 0 16 16"><rect x="5.6" y="0.6" width="4.8" height="1.8" rx=".6" fill="#42526E"/><rect x="0.3" y="1.6" width="15.4" height="2" rx=".8" fill="#42526E"/><path d="M1.4 4.8 H14.6 L13.2 16 H2.8 Z" fill="#42526E"/></svg>
<svg style="position:absolute;left:1549px;top:592px" width="6" height="18" viewBox="0 0 6 18"><circle cx="3" cy="1.9" r="2.05" fill="#42526E"/><circle cx="3" cy="9" r="2.05" fill="#42526E"/><circle cx="3" cy="16" r="2.05" fill="#42526E"/></svg>
<svg style="position:absolute;left:20px;top:653px" width="20" height="20" viewBox="0 0 20 20"><path d="M10.10 3.20 L12.57 7.70 L17.61 8.66 L14.09 12.40 L14.74 17.49 L10.10 15.30 L5.46 17.49 L6.11 12.40 L2.59 8.66 L7.63 7.70 Z" fill="none" stroke="#C2C3C6" stroke-width="1.9" stroke-linejoin="round"/></svg>
<svg style="position:absolute;left:66.5px;top:653px" width="14" height="16" viewBox="0 0 14 16"><path d="M2 1.2 V14.6" stroke="#172B4D" stroke-width="2.2" stroke-linecap="round"/><path d="M1.5 1 Q4 0.4 6.5 1 Q9.2 1.6 12.6 1.2 V9.2 Q9.2 9.6 6.5 9 Q4 8.4 1.5 9 Z" fill="#172B4D"/></svg>
<div class="t" style="left:112.10px;top:650.65px;font-size:14px;color:#0052CC;font-weight:400;letter-spacing:0.358px;-webkit-text-stroke:0.42px #0052CC;">Entwicklung</div>
<div style="position:absolute;left:353px;top:653.4px;width:57.7px;height:19.2px;background:#F4F5F7;border-radius:3px"></div>
<div class="t" style="left:357.20px;top:655.25px;font-size:14px;color:#172B4D;font-weight:400;letter-spacing:-1.348px;">GLOBAL</div>
<div class="t" style="left:473.40px;top:655.95px;font-size:14px;color:#172B4D;font-weight:400;letter-spacing:-1.328px;">GLOBAL</div>
<div style="position:absolute;left:598px;top:655.2px;width:45.5px;height:15.6px;background:#DFE1E6;border-radius:3px"></div>
<div class="t" style="left:602.20px;top:657.87px;font-size:11.5px;color:#42526E;font-weight:400;letter-spacing:-0.616px;-webkit-text-stroke:0.5px #42526E;">BESI...</div>
<svg style="position:absolute;left:668px;top:647px" width="32" height="32" viewBox="0 0 32 32"><circle cx="16" cy="16" r="16" fill="#00B8D9"/>
<path d="M5.6 8.2 Q6.5 6.6 9 6.8 L11 7.5 L10.2 12.6 L6.4 12.4 Q5.4 10.5 5.6 8.2Z" fill="#FF8B00"/>
<path d="M26.4 8.2 Q25.5 6.6 23 6.8 L21 7.5 L21.8 12.6 L25.6 12.4 Q26.6 10.5 26.4 8.2Z" fill="#FF8B00"/>
<path d="M8.2 8.6 Q8.5 6.6 10.5 6.6 H21.5 Q23.5 6.6 23.8 8.6 L24.4 21.6 Q24 23.8 21.5 25.2 L19.8 27 H12.2 L10.5 25.2 Q8 23.8 7.6 21.6 Z" fill="#FFAB00"/>
<path d="M13 6.6 H19 L19.2 11 Q21.2 13 21.4 16 L21.6 22.8 L19.6 24.6 H12.4 L10.4 22.8 L10.6 16 Q10.8 13 12.8 11 Z" fill="#fff"/>
<circle cx="12" cy="12" r="1.05" fill="#344563"/><circle cx="20.2" cy="12" r="1.05" fill="#344563"/>
<ellipse cx="16" cy="20.4" rx="2.6" ry="1.7" fill="#344563"/><path d="M14.2 23.6 H17.8 L16.8 24.8 H15.2 Z" fill="#344563"/><path d="M15.7 21.5 V23.8" stroke="#344563" stroke-width=".6"/>
</svg>
<div class="t" style="left:721.90px;top:656.05px;font-size:14px;color:#0052CC;font-weight:400;letter-spacing:0.339px;-webkit-text-stroke:0.3px #0052CC;">admin</div>
<div class="t" style="left:830.30px;top:655.95px;font-size:14px;color:#172B4D;font-weight:400;letter-spacing:0.113px;">1/23/2024</div>
<svg style="position:absolute;left:947px;top:647px" width="32" height="32" viewBox="0 0 32 32"><circle cx="16" cy="16" r="16" fill="#00B8D9"/>
<path d="M5.6 8.2 Q6.5 6.6 9 6.8 L11 7.5 L10.2 12.6 L6.4 12.4 Q5.4 10.5 5.6 8.2Z" fill="#FF8B00"/>
<path d="M26.4 8.2 Q25.5 6.6 23 6.8 L21 7.5 L21.8 12.6 L25.6 12.4 Q26.6 10.5 26.4 8.2Z" fill="#FF8B00"/>
<path d="M8.2 8.6 Q8.5 6.6 10.5 6.6 H21.5 Q23.5 6.6 23.8 8.6 L24.4 21.6 Q24 23.8 21.5 25.2 L19.8 27 H12.2 L10.5 25.2 Q8 23.8 7.6 21.6 Z" fill="#FFAB00"/>
<path d="M13 6.6 H19 L19.2 11 Q21.2 13 21.4 16 L21.6 22.8 L19.6 24.6 H12.4 L10.4 22.8 L10.6 16 Q10.8 13 12.8 11 Z" fill="#fff"/>
<circle cx="12" cy="12" r="1.05" fill="#344563"/><circle cx="20.2" cy="12" r="1.05" fill="#344563"/>
<ellipse cx="16" cy="20.4" rx="2.6" ry="1.7" fill="#344563"/><path d="M14.2 23.6 H17.8 L16.8 24.8 H15.2 Z" fill="#344563"/><path d="M15.7 21.5 V23.8" stroke="#344563" stroke-width=".6"/>
</svg>
<div class="t" style="left:1001.60px;top:656.05px;font-size:14px;color:#0052CC;font-weight:400;letter-spacing:0.339px;-webkit-text-stroke:0.3px #0052CC;">admin</div>
<svg style="position:absolute;left:1134px;top:647px" width="32" height="32" viewBox="0 0 32 32"><circle cx="16" cy="16" r="16" fill="#00B8D9"/>
<path d="M5.6 8.2 Q6.5 6.6 9 6.8 L11 7.5 L10.2 12.6 L6.4 12.4 Q5.4 10.5 5.6 8.2Z" fill="#FF8B00"/>
<path d="M26.4 8.2 Q25.5 6.6 23 6.8 L21 7.5 L21.8 12.6 L25.6 12.4 Q26.6 10.5 26.4 8.2Z" fill="#FF8B00"/>
<path d="M8.2 8.6 Q8.5 6.6 10.5 6.6 H21.5 Q23.5 6.6 23.8 8.6 L24.4 21.6 Q24 23.8 21.5 25.2 L19.8 27 H12.2 L10.5 25.2 Q8 23.8 7.6 21.6 Z" fill="#FFAB00"/>
<path d="M13 6.6 H19 L19.2 11 Q21.2 13 21.4 16 L21.6 22.8 L19.6 24.6 H12.4 L10.4 22.8 L10.6 16 Q10.8 13 12.8 11 Z" fill="#fff"/>
<circle cx="12" cy="12" r="1.05" fill="#344563"/><circle cx="20.2" cy="12" r="1.05" fill="#344563"/>
<ellipse cx="16" cy="20.4" rx="2.6" ry="1.7" fill="#344563"/><path d="M14.2 23.6 H17.8 L16.8 24.8 H15.2 Z" fill="#344563"/><path d="M15.7 21.5 V23.8" stroke="#344563" stroke-width=".6"/>
</svg>
<div class="t" style="left:1187.90px;top:656.05px;font-size:14px;color:#0052CC;font-weight:400;letter-spacing:0.514px;-webkit-text-stroke:0.3px #0052CC;">admin</div>
<div class="t" style="left:1312.40px;top:655.95px;font-size:14px;color:#172B4D;font-weight:400;letter-spacing:0.050px;">2/01/2024</div>
<div style="position:absolute;left:1421px;top:655px;width:18px;height:16px;background:#0052CC;border-radius:8px"></div>
<div class="t" style="left:1426.80px;top:657.14px;font-size:12px;color:#fff;font-weight:400;letter-spacing:0.000px;-webkit-text-stroke:0.33px #fff;">6</div>
<svg style="position:absolute;left:1512px;top:655px" width="16" height="16" viewBox="0 0 16 16"><rect x="5.6" y="0.6" width="4.8" height="1.8" rx=".6" fill="#42526E"/><rect x="0.3" y="1.6" width="15.4" height="2" rx=".8" fill="#42526E"/><path d="M1.4 4.8 H14.6 L13.2 16 H2.8 Z" fill="#42526E"/></svg>
<svg style="position:absolute;left:1549px;top:654px" width="6" height="18" viewBox="0 0 6 18"><circle cx="3" cy="1.9" r="2.05" fill="#42526E"/><circle cx="3" cy="9" r="2.05" fill="#42526E"/><circle cx="3" cy="16" r="2.05" fill="#42526E"/></svg>
<div style="position:absolute;left:1398px;top:397px;width:180px;height:52px;background:#fff;border-radius:4px;box-shadow:0 4px 8px -2px rgba(9,30,66,.25),0 0 1px rgba(9,30,66,.31)"></div>
<svg style="position:absolute;left:1416px;top:412px" width="20" height="22" viewBox="0 0 20 22"><path d="M3.3 15.5 V3.5 Q3.3 2 4.8 2 H13" fill="none" stroke="#172B4D" stroke-width="2" stroke-linecap="round"/><rect x="7" y="6" width="10" height="13.8" rx="1.2" fill="none" stroke="#172B4D" stroke-width="2"/></svg>
<div class="t" style="left:1450.00px;top:416.15px;font-size:14px;color:#42526E;font-weight:400;letter-spacing:-0.095px;">Kopieren Vorlage</div>
</body></html>
